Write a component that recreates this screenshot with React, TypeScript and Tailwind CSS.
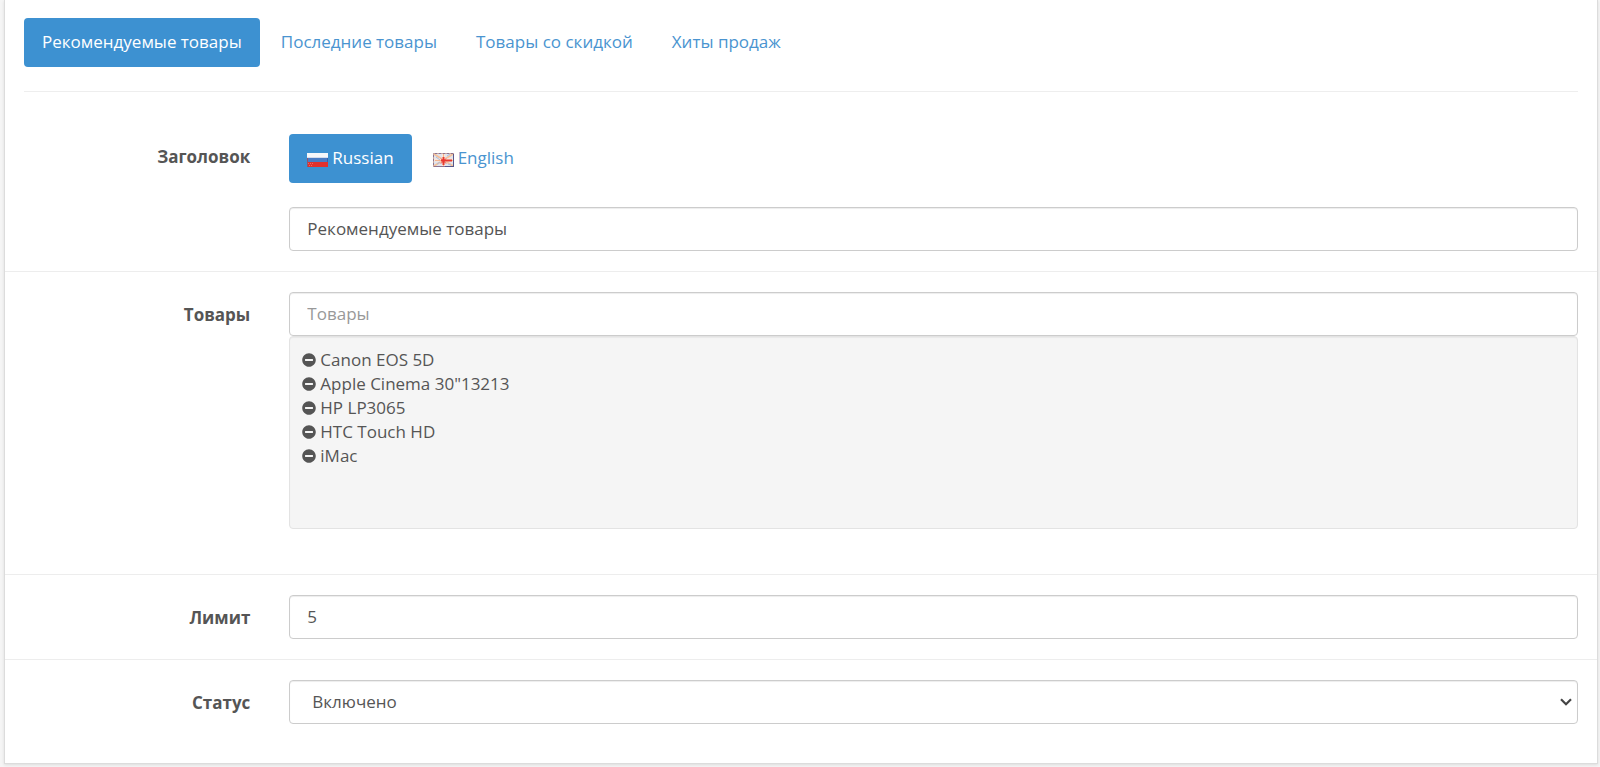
import { useState } from "react"
import clsx from "clsx"
import { FaMinusCircle } from "react-icons/fa"

const tabs = ["Рекомендуемые товары", "Последние товары", "Товары со скидкой", "Хиты продаж"]

const controlClass =
  "block h-11 w-full rounded-[4px] border border-[#ccc] bg-white text-[#555] shadow-[inset_0_1px_1px_rgba(0,0,0,0.075)] outline-none focus:border-[#66afe9]"

function RussianFlag() {
  return (
    <svg viewBox="0 0 21 14" className="mt-1 h-[14px] w-[21px]" aria-hidden="true">
      <rect width="21" height="5" fill="#f6f7fa" />
      <rect y="4" width="21" height="1" fill="#d5dcec" />
      <rect y="5" width="21" height="4" fill="#4a7cc4" />
      <rect y="9" width="21" height="5" fill="#e2312d" />
      <rect y="5" width="1" height="9" fill="#8f5570" />
      <rect x="20" y="5" width="1" height="4" fill="#3d5fa8" />
      <path d="M1 10.500h5M2 12.500h3" stroke="#ee6a62" strokeDasharray="1 1" />
    </svg>
  )
}

function EnglishFlag() {
  return (
    <svg viewBox="0 0 21 14" className="mt-1 h-[14px] w-[21px]" aria-hidden="true">
      <rect width="21" height="14" fill="#dfe4ef" />
      <path d="M1 1l19 12M20 1L1 13" stroke="#f5c09a" strokeWidth="2" />
      <path d="M10.500 0v14M0 7h21" stroke="#fbe6d8" strokeWidth="3" />
      <path d="M3 4l4 3M14 3l3-2M4 11l3-2M15 11l3 1" stroke="#a9bddd" />
      <path d="M10.500 1v12M2 7.500h18" stroke="#f5b48e" />
      <path d="M10.500 4v8M8 7.500h11" stroke="#e8382f" strokeWidth="2" />
      <path d="M8 5.500l5 5M13 5.500l-5 5" stroke="#e8382f" />
      <rect x="0.500" y="0.500" width="20" height="13" fill="none" stroke="#8b7391" />
      <path d="M0 0.500h21M0.500 0v14" stroke="#c3a19c" strokeDasharray="2 2" />
      <path d="M20.500 1v13M12 13.500h9" stroke="#58588a" />
    </svg>
  )
}

const languages = [
  { name: "Russian", Flag: RussianFlag, title: "Рекомендуемые товары" },
  { name: "English", Flag: EnglishFlag, title: "Featured" },
]

interface PillProps {
  active: boolean
  onClick: () => void
  children: React.ReactNode
}

function Pill({ active, onClick, children }: PillProps) {
  return (
    <a
      href="#"
      onClick={(e) => {
        e.preventDefault()
        onClick()
      }}
      className={clsx(
        "flex h-[49px] items-center gap-1 rounded-[4px] px-[18px] pb-[2px]",
        active ? "bg-[#3d91d1] text-white" : "text-[#4a94d0] hover:bg-[#eee]"
      )}
    >
      {children}
    </a>
  )
}

interface FormRowProps {
  label: string
  htmlFor: string
  className?: string
  children: React.ReactNode
}

function FormRow({ label, htmlFor, className, children }: FormRowProps) {
  return (
    <div className={clsx("flex py-5", className)}>
      <label htmlFor={htmlFor} className="w-1/6 shrink-0 px-5 pt-[11px] text-right font-bold">
        {label}
      </label>
      <div className="min-w-0 flex-1 px-[19px]">{children}</div>
    </div>
  )
}

export default function App() {
  const [tab, setTab] = useState(0)
  const [language, setLanguage] = useState(0)
  const [titles, setTitles] = useState(languages.map((l) => l.title))
  const [products, setProducts] = useState([
    "Canon EOS 5D",
    'Apple Cinema 30"13213',
    "HP LP3065",
    "HTC Touch HD",
    "iMac",
  ])

  return (
    <div className="min-h-screen bg-[#f5f5f5] pr-[2px] pb-1 pl-1 font-['Open_Sans','Noto_Sans',sans-serif] text-[17px] leading-6 text-[#555]">
      <div className="border-x border-b border-[#dcdcdc] bg-white pb-[19px] shadow-[0_1px_3px_rgba(0,0,0,0.1)]">
        <nav className="mx-[19px] flex gap-[3px] border-b border-[#eee] pt-[18px] pb-6">
          {tabs.map((name, i) => (
            <Pill key={name} active={i === tab} onClick={() => setTab(i)}>
              {name}
            </Pill>
          ))}
        </nav>

        <form onSubmit={(e) => e.preventDefault()}>
          <FormRow label="Заголовок" htmlFor="title" className="mt-[22px]">
            <div className="mb-6 flex gap-[3px]">
              {languages.map(({ name, Flag }, i) => (
                <Pill key={name} active={i === language} onClick={() => setLanguage(i)}>
                  <Flag />
                  {name}
                </Pill>
              ))}
            </div>
            <input
              id="title"
              type="text"
              value={titles[language]}
              onChange={(e) => setTitles(titles.map((t, i) => (i === language ? e.target.value : t)))}
              className={clsx(controlClass, "px-[17px] pb-[2px]")}
            />
          </FormRow>

          <FormRow label="Товары" htmlFor="products" className="border-t border-[#ededed]">
            <input
              id="products"
              type="text"
              placeholder="Товары"
              className={clsx(controlClass, "px-[17px] pb-[2px] placeholder:text-[#999]")}
            />
            <ul className="mb-[25px] h-[193px] overflow-auto rounded-[4px] border border-[#e3e3e3] bg-[#f5f5f5] px-3 py-[11px] shadow-[inset_0_1px_1px_rgba(0,0,0,0.05)]">
              {products.map((product) => (
                <li key={product} className="flex items-center gap-1">
                  <button
                    type="button"
                    aria-label={product}
                    onClick={() => setProducts(products.filter((p) => p !== product))}
                  >
                    <FaMinusCircle size={14} />
                  </button>
                  {product}
                </li>
              ))}
            </ul>
          </FormRow>

          <FormRow label="Лимит" htmlFor="limit" className="border-t border-[#ededed]">
            <input id="limit" type="text" defaultValue="5" className={clsx(controlClass, "px-[17px] pb-[2px]")} />
          </FormRow>

          <FormRow label="Статус" htmlFor="status" className="border-t border-[#ededed]">
            <div className="relative">
              <select id="status" defaultValue="1" className={clsx(controlClass, "appearance-none px-[22px]")}>
                <option value="1">Включено</option>
                <option value="0">Отключено</option>
              </select>
              <svg
                viewBox="0 0 12 8"
                className="pointer-events-none absolute top-[18px] right-[6px] h-2 w-3"
                fill="none"
                stroke="#444"
                strokeWidth="2.2"
                aria-hidden="true"
              >
                <path d="M1 1.200l5 5 5-5" />
              </svg>
            </div>
          </FormRow>
        </form>
      </div>
    </div>
  )
}
